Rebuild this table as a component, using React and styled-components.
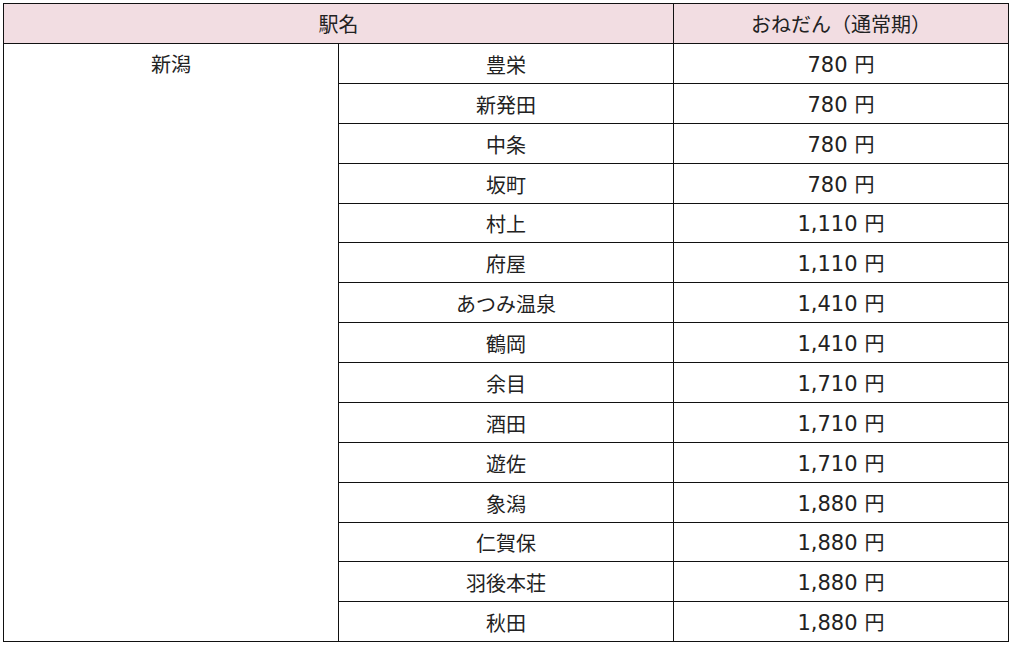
import React from 'react'
import styled, { createGlobalStyle } from "styled-components";

const GlobalStyle = createGlobalStyle`
  html, body {
    margin: 0;
    padding: 0;
    background: #ffffff;
  }
`

const Page = styled.div`
  padding: 3px 3px 0 3px;
  width: 1004px;
  font-family: "Noto Sans CJK JP", "Noto Sans", sans-serif;
`

const FareTable = styled.table`
  width: 1005px;
  border-collapse: collapse;
  table-layout: fixed;
  color: #222222;
  font-size: 20px;
`

const HeadCell = styled.th`
  background: #f2dde2;
  font-weight: normal;
  height: 39px;
  padding: 0;
  border: 1px solid #111111;
  text-align: center;
  vertical-align: middle;
  line-height: 1;
`

const Cell = styled.td`
  height: 35.875px;
  padding: 3px 0 0;
  border: 1px solid #111111;
  text-align: center;
  vertical-align: middle;
  line-height: 1;
`

const CityCell = styled.td`
  padding: 10px 0 0;
  border: 1px solid #111111;
  text-align: center;
  vertical-align: top;
  line-height: 1;
`

const Price = styled.span`
  font-family: "DejaVu Sans", "Noto Sans CJK JP", sans-serif;
  font-size: 21px;
`

const Yen = styled.span`
  margin-left: 7px;
`

const stations = [
    ['豊栄', '780'],
    ['新発田', '780'],
    ['中条', '780'],
    ['坂町', '780'],
    ['村上', '1,110'],
    ['府屋', '1,110'],
    ['あつみ温泉', '1,410'],
    ['鶴岡', '1,410'],
    ['余目', '1,710'],
    ['酒田', '1,710'],
    ['遊佐', '1,710'],
    ['象潟', '1,880'],
    ['仁賀保', '1,880'],
    ['羽後本荘', '1,880'],
    ['秋田', '1,880'],
]

const App = () => {
    return(
        <Page>
            <GlobalStyle />
            <FareTable>
                <colgroup>
                    <col style={{width: "335px"}} />
                    <col style={{width: "335px"}} />
                    <col style={{width: "335px"}} />
                </colgroup>
                <thead>
                    <tr>
                        <HeadCell colSpan={2}>駅名</HeadCell>
                        <HeadCell>おねだん（通常期）</HeadCell>
                    </tr>
                </thead>
                <tbody>
                    {stations.map(([name, price], i) => (
                        <tr key={name}>
                            {i === 0 && <CityCell rowSpan={stations.length}>新潟</CityCell>}
                            <Cell>{name}</Cell>
                            <Cell><Price>{price}</Price><Yen>円</Yen></Cell>
                        </tr>
                    ))}
                </tbody>
            </FareTable>
        </Page>
    )
};

export default App
